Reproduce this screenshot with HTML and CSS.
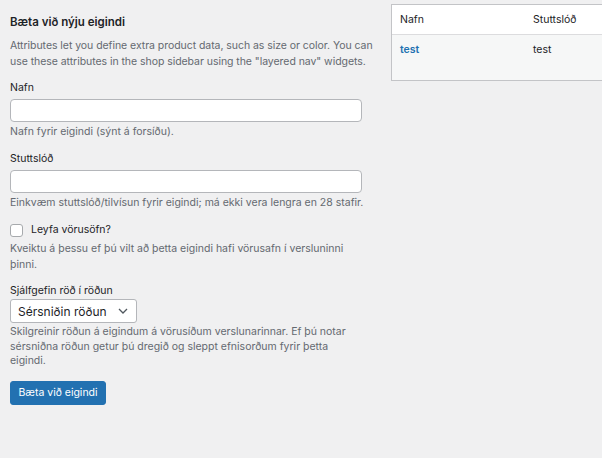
FILE: index.html
```html
<!DOCTYPE html>
<html lang="is">
<head>
<meta charset="utf-8">
<title>Eigindi</title>
<link rel="stylesheet" href="styles.css">
</head>
<body>
<div class="page">
  <div class="left">
    <h2 class="title">Bæta við nýju eigindi</h2>
    <p class="intro">Attributes let you define extra product data, such as size or color. You can use these attributes in the shop sidebar using the "layered nav" widgets.</p>

    <div class="field f-name">
      <label class="lbl" for="n">Nafn</label>
      <input class="txt" id="n" type="text">
      <p class="help">Nafn fyrir eigindi (sýnt á forsíðu).</p>
    </div>

    <div class="field f-slug">
      <label class="lbl" for="s">Stuttslóð</label>
      <input class="txt" id="s" type="text">
      <p class="help">Einkvæm stuttslóð/tilvísun fyrir eigindi; má ekki vera lengra en 28 stafir.</p>
    </div>

    <div class="field f-check">
      <label class="chk-row"><span class="chk"></span><span>Leyfa vörusöfn?</span></label>
      <p class="help">Kveiktu á þessu ef þú vilt að þetta eigindi hafi vörusafn í versluninni þinni.</p>
    </div>

    <div class="field f-order">
      <label class="lbl">Sjálfgefin röð í röðun</label>
      <div class="select">
        <span>Sérsniðin röðun</span>
        <svg class="chev" width="10" height="6" viewBox="0 0 10 6"><path d="M1 1 L5 5 L9 1" fill="none" stroke="#50575e" stroke-width="1.3"/></svg>
      </div>
      <p class="help">Skilgreinir röðun á eigindum á vörusíðum verslunarinnar. Ef þú notar sérsniðna röðun getur þú dregið og sleppt efnisorðum fyrir þetta eigindi.</p>
    </div>

    <button class="btn" type="button">Bæta við eigindi</button>
  </div>

  <div class="right">
    <div class="table">
      <div class="thead">
        <span class="c1">Nafn</span>
        <span class="c2">Stuttslóð</span>
      </div>
      <div class="trow">
        <a class="c1 link" href="#">test</a>
        <span class="c2">test</span>
      </div>
    </div>
  </div>
</div>
</body>
</html>
```
FILE: styles.css
```css
html, body {
  margin: 0;
  padding: 0;
  overflow: hidden;
  background: #f0f0f1;
}
body {
  font-family: Inter, "Liberation Sans", Arial, sans-serif;
  font-size: 10.5px;
  color: #1d2327;
}
.page {
  display: flex;
  gap: 11px;
  padding: 4px 0 0 10px;
}
.left {
  width: 370px;
  flex: none;
}
.title {
  margin: 10px 0 0;
  font-size: 11.5px;
  line-height: 16px;
  font-weight: 600;
}
.intro {
  margin: 8px 0 0;
  line-height: 16px;
  color: #646970;
  letter-spacing: -0.05px;
}
.field { margin: 0; }
.f-name { margin-top: 10px; }
.f-slug { margin-top: 11px; }
.f-check { margin-top: 11px; }
.f-order { margin-top: 10px; }
.lbl {
  display: block;
  line-height: 16px;
}
.txt {
  display: block;
  box-sizing: border-box;
  width: 352px;
  height: 23px;
  margin: 3px 0 0;
  border: 1px solid #b4b6ba;
  border-radius: 4px;
  background: #fff;
  padding: 0 6px;
}
.help {
  margin: 2px 0 0;
  max-width: 354px;
  line-height: 16px;
  color: #646970;
}
.chk-row {
  display: flex;
  align-items: center;
  gap: 8px;
  line-height: 16px;
  height: 16px;
}
.chk {
  box-sizing: border-box;
  width: 13px;
  height: 13px;
  border: 1px solid #a7aaad;
  border-radius: 3px;
  background: #fff;
}
.f-check .help { margin-top: 3px; }
.select {
  box-sizing: border-box;
  width: 127px;
  height: 24px;
  margin-top: 0;
  border: 1px solid #b4b6ba;
  border-radius: 3px;
  background: #fff;
  display: flex;
  align-items: center;
  justify-content: space-between;
  padding: 0 8px 0 7px;
  font-size: 12px;
}
.f-order .help {
  margin-top: 2px;
  line-height: 14.5px;
}
.btn {
  display: block;
  margin-top: 12px;
  height: 24px;
  width: 96px;
  padding: 0;
  border: 1px solid #2271b1;
  border-radius: 3px;
  background: #2271b1;
  color: #fff;
  font-family: inherit;
  font-size: 10.5px;
}
.right {
  flex: none;
  width: 230px;
}
.table {
  border: 1px solid #c3c4c7;
  background: #fff;
}
.thead, .trow {
  display: flex;
}
.thead {
  height: 29px;
  align-items: center;
  border-bottom: 1px solid #dcdcde;
}
.trow {
  height: 45px;
  background: #f6f7f7;
  align-items: flex-start;
  padding-top: 8px;
  box-sizing: border-box;
}
.c1 {
  width: 133px;
  padding-left: 8px;
}
.c2 { flex: 1; }
.link {
  color: #2271b1;
  font-weight: 600;
  text-decoration: none;
}
```
